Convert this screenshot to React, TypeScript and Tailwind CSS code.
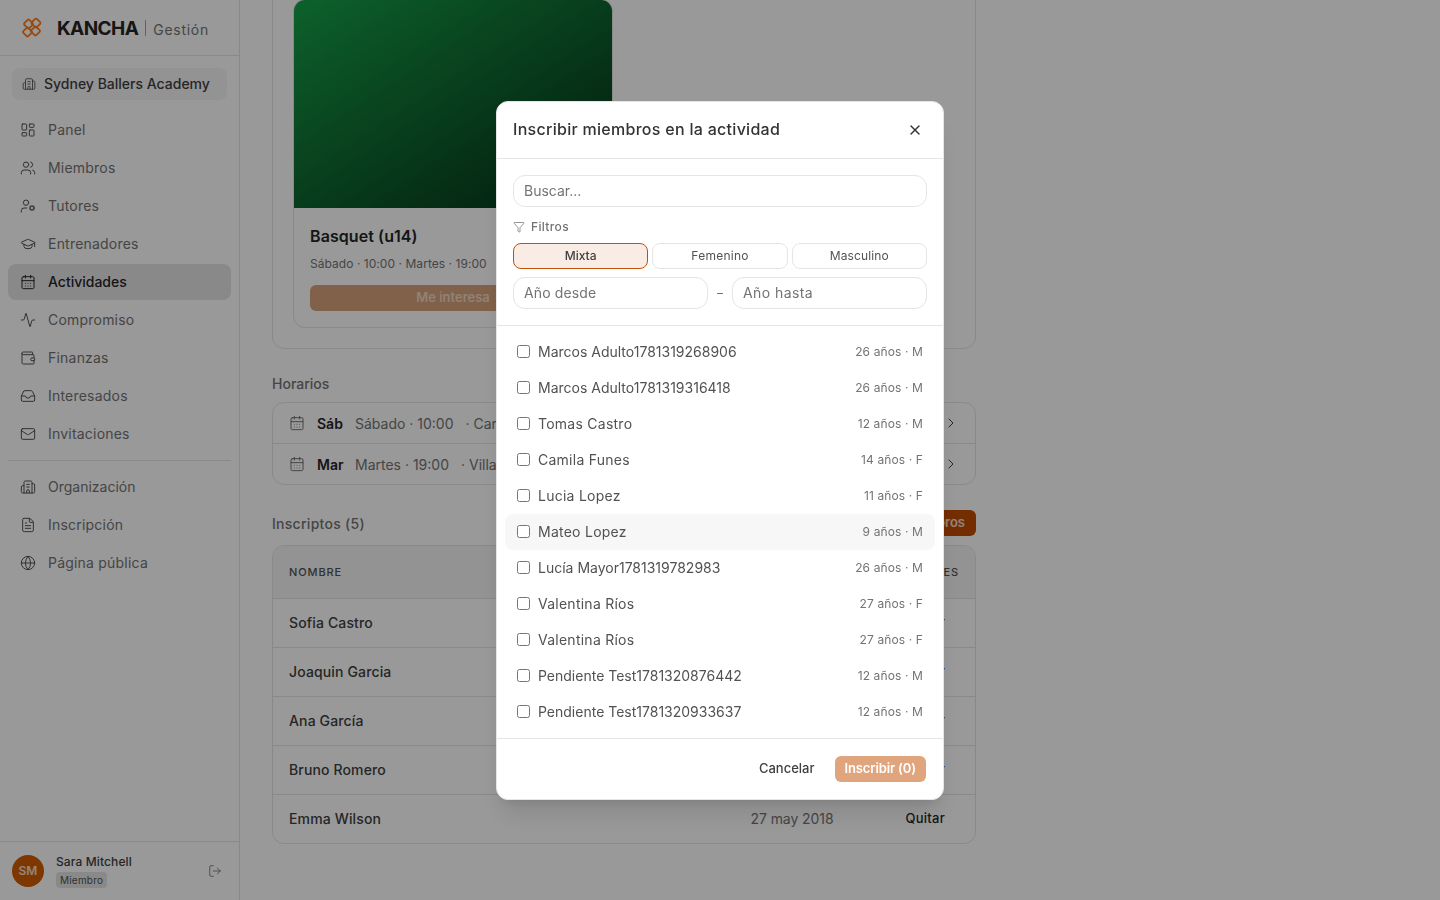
import React from "react";
import {
  LayoutDashboard, Users, UserCog, GraduationCap, CalendarDays, Activity, Wallet, Inbox, Mail,
  Building2, FileText, Globe, LogOut, Funnel, X, ChevronRight,
} from "lucide-react";

const nav = [
  { label: "Panel", Icon: LayoutDashboard },
  { label: "Miembros", Icon: Users },
  { label: "Tutores", Icon: UserCog },
  { label: "Entrenadores", Icon: GraduationCap },
  { label: "Actividades", Icon: CalendarDays, active: true, tight: true },
  { label: "Compromiso", Icon: Activity },
  { label: "Finanzas", Icon: Wallet },
  { label: "Interesados", Icon: Inbox },
  { label: "Invitaciones", Icon: Mail },
];
const nav2 = [
  { label: "Organización", Icon: Building2, tight: true },
  { label: "Inscripción", Icon: FileText },
  { label: "Página pública", Icon: Globe },
];

const members = [
  ["Marcos Adulto1781319268906", "26 años · M", true],
  ["Marcos Adulto1781319316418", "26 años · M", true],
  ["Tomas Castro", "12 años · M", false],
  ["Camila Funes", "14 años · F", false],
  ["Lucia Lopez", "11 años · F", false],
  ["Mateo Lopez", "9 años · M", false],
  ["Lucía Mayor1781319782983", "26 años · M", true],
  ["Valentina Ríos", "27 años · F", false],
  ["Valentina Ríos", "27 años · F", false],
  ["Pendiente Test1781320876442", "12 años · M", true],
  ["Pendiente Test1781320933637", "12 años · M", true],
] as const;

const enrolled = ["Sofia Castro", "Joaquin Garcia", "Ana García", "Bruno Romero", "Emma Wilson"];

function NavItem({ label, Icon, active, tight }: { label: string; Icon: React.ComponentType<any>; active?: boolean; tight?: boolean }) {
  return (
    <div
      className={
        "flex h-9 items-center gap-3 rounded-lg px-3 text-[14px] " +
        (tight ? "tracking-normal " : "tracking-[0.015em] ") +
        (active ? "bg-[#e5e5e5] font-medium text-[#262626]" : "text-[#737373]")
      }
    >
      <Icon size={16} strokeWidth={1.5} className={active ? "text-[#262626]" : "text-[#525252]"} />
      <span className="pb-[1px]">{label}</span>
    </div>
  );
}

function Logo() {
  return (
    <svg width="22" height="22" viewBox="0 0 22 22" fill="none" stroke="#ff7a14" strokeWidth="1.7" strokeLinejoin="round" className="shrink-0">
      <rect x="4" y="3.5" width="7" height="7" rx="1.1" transform="rotate(45 7.5 7)" />
      <rect x="11.5" y="2.5" width="7" height="7" rx="1.1" transform="rotate(45 15 6)" />
      <rect x="3" y="11.5" width="7" height="7" rx="1.1" transform="rotate(45 6.5 15)" />
      <rect x="11" y="10.5" width="7" height="7" rx="1.1" transform="rotate(45 14.5 14)" />
    </svg>
  );
}

function Sidebar() {
  return (
    <aside className="flex h-full w-[240px] shrink-0 flex-col border-r border-[#e5e5e5] bg-white">
      <div className="flex h-[56px] items-center border-b border-[#e5e5e5] pl-[21px]">
        <Logo />
        <span className="ml-[14px] mt-[3px] text-[19px] font-bold tracking-[-0.03em] text-[#262626]">KANCHA</span>
        <span className="mx-[7px] h-4 w-px bg-[#a3a3a3]" />
        <span className="mt-[3px] text-[14px] tracking-[0.05em] text-[#737373]">Gestión</span>
      </div>
      <div className="px-3 pt-[12px]">
        <div className="flex h-[32px] items-center gap-2 rounded-lg bg-[#f5f5f5] pl-[10px] text-[14px] font-medium text-[#404040]">
          <Building2 size={14} strokeWidth={1.5} className="text-[#525252]" />
          <span className="pb-[2px]">Sydney Ballers Academy</span>
        </div>
      </div>
      <nav className="flex flex-1 flex-col px-2 pt-[12px]">
        <div className="flex flex-col gap-[2px]">
          {nav.map((n) => <NavItem key={n.label} {...n} />)}
        </div>
        <div className="mt-2 mb-2 h-px bg-[#e5e5e5]" />
        <div className="flex flex-col gap-[2px]">
          {nav2.map((n) => <NavItem key={n.label} {...n} />)}
        </div>
      </nav>
      <div className="flex h-[59px] items-center border-t border-[#e5e5e5] pl-3 pr-[17px]">
        <div className="flex h-8 w-8 items-center justify-center rounded-full bg-[#d25c00] text-[12px] font-semibold text-white/80">SM</div>
        <div className="ml-3 flex flex-1 flex-col items-start gap-[2px]">
          <span className="text-[12px] font-medium leading-[16px] tracking-[0.01em] text-[#404040]">Sara Mitchell</span>
          <span className="rounded bg-[#e5e5e5] px-1 text-[10px] leading-[16px] tracking-[0.02em] text-[#525252]">Miembro</span>
        </div>
        <LogOut size={14} strokeWidth={1.5} className="text-[#737373]" />
      </div>
    </aside>
  );
}

function Main() {
  return (
    <main className="h-full flex-1 overflow-hidden bg-white pl-8">
      <div className="-mt-[23px] w-[704px]">
        <section className="rounded-[12px] border border-[#e5e5e5] px-5 pt-[21px] pb-5">
          <div className="w-[320px] overflow-hidden rounded-[12px] border border-[#e5e5e5]">
            <div className="h-[208px] bg-gradient-to-br from-[#16a34a] to-[#052e16]" />
            <div className="p-4 pt-[17px]">
              <div className="text-[16px] font-semibold leading-[22px] tracking-[0.005em] text-[#262626]">Basquet (u14)</div>
              <div className="mt-[9px] text-[12px] leading-[16px] tracking-[0.004em] text-[#737373]">Sábado · 10:00 · Martes · 19:00</div>
              <div className="mt-[13px] flex h-[26px] items-center justify-center rounded-md bg-[#d8a27a] text-[13px] font-semibold text-white/60">Me interesa</div>
            </div>
          </div>
        </section>
        <h3 className="mt-[25px] text-[14px] font-medium leading-5 text-[#737373]">Horarios</h3>
        <div className="mt-[8px] rounded-[12px] border border-[#e5e5e5]">
          {[["Sáb", "Sábado · 10:00", "Carrillo"], ["Mar", "Martes · 19:00", "Villa Crespo"]].map((r, i) => (
            <div key={r[0]} className={"flex items-center pl-4 pr-[16px] text-[14px] " + (i ? "h-[41px] border-t border-[#e5e5e5]" : "h-[40px]")}>
              <CalendarDays size={16} strokeWidth={1.5} className="text-[#737373]" />
              <span className="ml-3 w-[38px] font-semibold text-[#262626]">{r[0]}</span>
              <span className="text-[#737373]">{r[1]}</span>
              <span className="ml-3 flex-1 text-[#737373]">· {r[2]}</span>
              <ChevronRight size={16} strokeWidth={1.5} className="text-[#404040]" />
            </div>
          ))}
        </div>
        <div className="mt-[25px] flex h-[26px] items-center justify-between">
          <h3 className="text-[14px] font-medium tracking-[0.02em] text-[#737373]">Inscriptos (5)</h3>
          <div className="flex h-[26px] items-center rounded-md bg-[#c14b00] pl-[10px] pr-[11px] text-[13px] font-semibold text-white/80">Agregar miembros</div>
        </div>
        <div className="mt-[9px] overflow-hidden rounded-[12px] border border-[#e5e5e5]">
          <div className="flex h-[52px] items-center justify-between bg-[#f5f5f5] px-4 text-[11px] font-medium tracking-[0.08em] text-[#525252]">
            <span>NOMBRE</span>
            <span>ACCIONES</span>
          </div>
          {enrolled.map((n) => (
            <div key={n} className="flex h-[49px] items-center border-t border-[#e5e5e5] pl-4 pr-[30px] text-[14px]">
              <span className="flex-1 pb-[2px] font-medium tracking-[0.01em] text-[#404040]">{n}</span>
              <span className="w-[155px] pb-[2px] tracking-[-0.005em] text-[#737373]">27 may 2018</span>
              <span className="text-[13px] font-medium tracking-[0.02em] text-[#262626]">Quitar</span>
            </div>
          ))}
        </div>
      </div>
    </main>
  );
}

function Modal() {
  return (
    <div className="fixed inset-0 flex items-center justify-center bg-black/40">
      <div className="w-[448px] overflow-hidden rounded-[12px] border border-[#e5e5e5] bg-white shadow-xl">
        <div className="flex h-[57px] items-center justify-between border-b border-[#e5e5e5] pl-4 pr-[20px]">
          <h2 className="pb-[2px] text-[16px] font-medium tracking-[0.018em] text-[#333]">Inscribir miembros en la actividad</h2>
          <X size={16} strokeWidth={2} className="text-[#333]" />
        </div>
        <div className="border-b border-[#e5e5e5] px-4 pt-4 pb-4">
          <input readOnly placeholder="Buscar..." className="h-8 w-full rounded-[12px] border border-[#e5e5e5] px-[10px] text-[14px] outline-none placeholder:text-[#737373]" />
          <div className="mt-[12px] flex h-4 items-center gap-[6px] text-[12px] font-medium tracking-[0.03em] text-[#737373]">
            <Funnel size={12} strokeWidth={1.5} />
            <span>Filtros</span>
          </div>
          <div className="mt-2 flex gap-1">
            <button className="h-[26px] flex-1 rounded-lg border border-[#c2500a] bg-[#f9ece4] text-[12px] font-medium text-[#404040]">Mixta</button>
            <button className="h-[26px] flex-1 rounded-lg border border-[#e5e5e5] text-[12px] tracking-[0.02em] text-[#525252]">Femenino</button>
            <button className="h-[26px] flex-1 rounded-lg border border-[#e5e5e5] text-[12px] tracking-[0.01em] text-[#525252]">Masculino</button>
          </div>
          <div className="mt-2 flex items-center gap-2">
            <input readOnly placeholder="Año desde" className="h-8 min-w-0 flex-1 rounded-[12px] border border-[#e5e5e5] px-[10px] text-[14px] tracking-[0.01em] outline-none placeholder:text-[#737373]" />
            <span className="w-2 text-center text-[12px] text-[#737373]">–</span>
            <input readOnly placeholder="Año hasta" className="h-8 min-w-0 flex-1 rounded-[12px] border border-[#e5e5e5] px-[10px] text-[14px] tracking-[0.03em] outline-none placeholder:text-[#737373]" />
          </div>
        </div>
        <div className="border-b border-[#e5e5e5] px-2 py-2">
          {members.map(([name, meta, digits], i) => (
            <label key={i} className={"flex h-9 items-center gap-2 rounded-lg px-3 " + (i === 5 ? "bg-[#f7f7f7]" : "")}>
              <input type="checkbox" readOnly className="h-[13px] w-[13px]" />
              <span className={"flex-1 text-[14px] text-[#525252] " + (digits ? "tracking-normal" : "tracking-[0.018em]")}>{name}</span>
              <span className="text-[12px] tracking-[0.01em] text-[#737373]">{meta}</span>
            </label>
          ))}
        </div>
        <div className="flex h-[60px] items-center justify-end gap-[10px] pr-[17px]">
          <button className="h-[26px] px-[10px] text-[13px] font-medium text-[#404040]">Cancelar</button>
          <button className="h-[26px] rounded-md bg-[#e0a57c] px-[10px] text-[13px] font-semibold tracking-[-0.01em] text-white">Inscribir (0)</button>
        </div>
      </div>
    </div>
  );
}

export default function App() {
  return (
    <div className="flex h-screen w-full overflow-hidden bg-white font-['Inter',sans-serif]">
      <Sidebar />
      <Main />
      <Modal />
    </div>
  );
}
